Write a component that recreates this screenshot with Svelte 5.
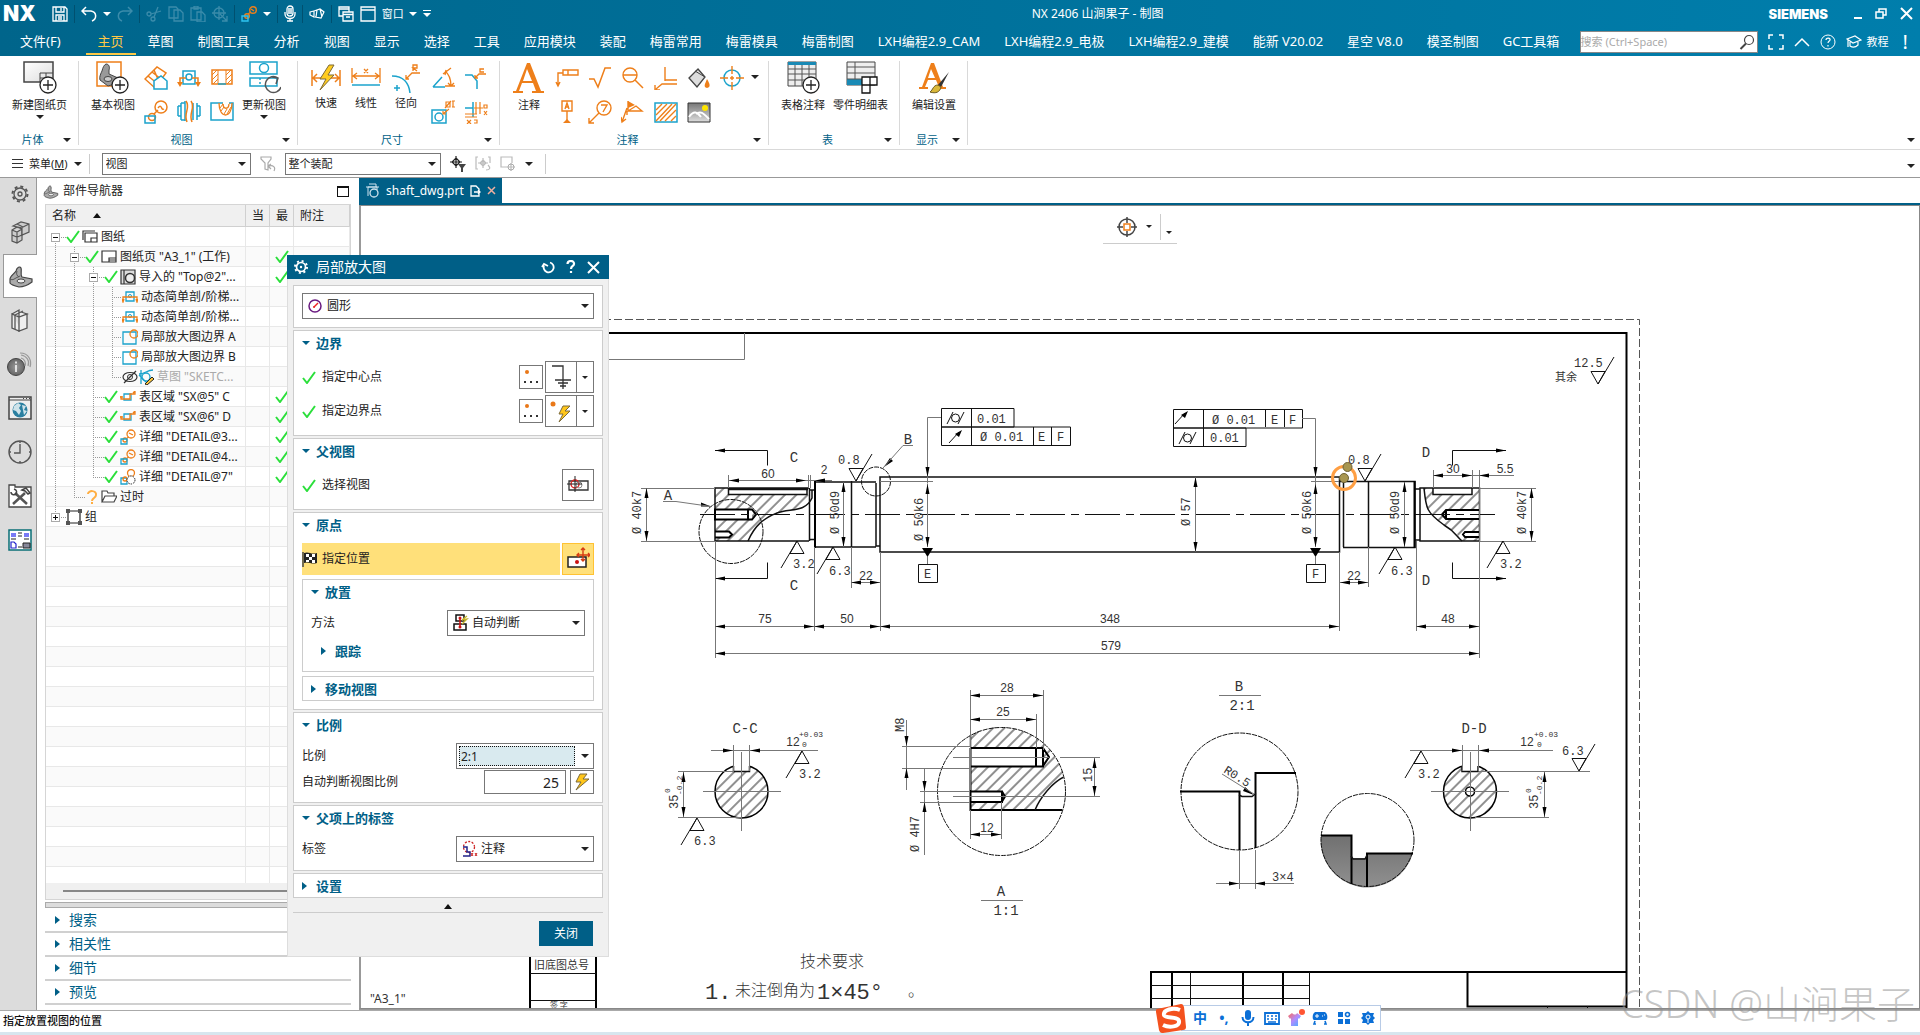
<script lang="ts">
	const O = '#ee7f1a';
	const C = '#1ba3cc';
	const G = '#555';

	// [width, height, markup]
	const icons: Record<string, [number, number, string]> = {
		save: [16, 16, '<g fill="none" stroke="#fff" stroke-width="1.3"><path d="M1 1h12l2 2v12H1z"/><path d="M4 1v5h8V1M9 2v3M4 15V9h8v6M6 11h4M6 13h4"/></g>'],
		undo: [16, 16, '<path d="M5 1L1 5l4 4M1 5h9c6 1 6 8 1 10" fill="none" stroke="#fff" stroke-width="1.5"/>'],
		redo: [16, 16, '<path d="M11 1l4 4-4 4M15 5H6C0 6 0 13 5 15" fill="none" stroke="#3b8cab" stroke-width="1.5"/>'],
		cut: [16, 16, '<g fill="none" stroke="#3b8cab" stroke-width="1.3"><circle cx="3" cy="8" r="2"/><circle cx="7" cy="13" r="2"/><path d="M5 8l10-3M8 11l4-10"/></g>'],
		copy: [16, 16, '<path d="M1 1h7l2 2v9H1zM6 4h6l3 3v8H6z" fill="#006a92" stroke="#3b8cab" stroke-width="1.3"/>'],
		paste: [16, 16, '<path d="M1 2h10v12H1zM4 0h4v3H4zM7 6h5l3 3v7H7z" fill="#006a92" stroke="#3b8cab" stroke-width="1.3"/>'],
		snap: [16, 16, '<g fill="none" stroke="#3b8cab" stroke-width="1.3"><circle cx="7" cy="7" r="5"/><path d="M7 0v14M0 7h14M8 8l7 7M15 10v5h-5"/></g>'],
		detailTop: [16, 16, `<g fill="none" stroke-width="1.4"><circle cx="12" cy="4" r="3.3" stroke="${O}"/><circle cx="6" cy="10" r="2.3" stroke="${O}"/><path d="M7 8l3-2M10 3l3 2" stroke="${O}"/><path d="M1 10h6v5H1z" stroke="#2ec3f0"/></g>`],
		mic: [12, 17, '<g fill="none" stroke="#fff" stroke-width="1.3"><rect x="3" y="1" width="6" height="10" rx="3"/><path d="M1 7v2c0 6 10 6 10 0V7M6 13v3M3 16h6M4 4h4M4 6h4M4 8h4"/></g>'],
		touch: [16, 14, '<path d="M1 5l4-1v6l-4-2zM5 4l6-2 4 3-3 6-6-1M8 3l-1 7M11 2l2 8" fill="none" stroke="#fff" stroke-width="1.2"/>'],
		cascade: [16, 16, '<g fill="#006a92" stroke="#fff" stroke-width="1.3"><path d="M1 1h10v9H1zM1 3h10"/><path d="M5 6h10v9H5zM5 8.500h10M8 11h4"/></g>'],
		win: [16, 16, '<path d="M1 1h14v14H1zM1 4h14" fill="none" stroke="#fff" stroke-width="1.300"/>'],
		restore: [12, 11, '<path d="M4 4V1h7v6H8M1 4h7v6H1z" fill="none" stroke="#fff" stroke-width="1.5"/>'],
		close: [13, 13, '<path d="M1 1l11 11M12 1L1 12" stroke="#fff" stroke-width="2"/>'],
		min: [8, 13, '<path d="M0 11h8" stroke="#fff" stroke-width="2"/>'],
		full: [16, 16, '<path d="M1 5V1h4M11 1h4v4M15 11v4h-4M5 15H1v-4" fill="none" stroke="#fff" stroke-width="1.500"/>'],
		up: [16, 10, '<path d="M1 9l7-7 7 7" fill="none" stroke="#fff" stroke-width="1.5"/>'],
		help: [16, 16, '<circle cx="8" cy="8" r="7" fill="none" stroke="#fff"/><path d="M6 6c0-3 5-2 4 0 0 1-2 1-2 3M8 11v1.500" fill="none" stroke="#fff" stroke-width="1.2"/>'],
		cap: [16, 14, '<path d="M1 4l8-3 6 4-8 3zM4 7v4c3 2 6 1 8-1V6M2 5v7" fill="none" stroke="#fff" stroke-width="1.2"/>'],
		search: [16, 16, '<circle cx="10" cy="6" r="4.500" fill="none" stroke="#444" stroke-width="1.200"/><path d="M7 9.500L1.500 15" stroke="#444" stroke-width="2"/>'],
		sheet: [34, 34, '<defs><linearGradient id="sg" x2="1" y2="1"><stop stop-color="#fff"/><stop offset="1" stop-color="#ddd"/></linearGradient></defs><path d="M1 1h29v20H1z" fill="url(#sg)" stroke="#444" stroke-width="1.5"/><path d="M17 21v-9h13M17 17h13M23 12v5" fill="none" stroke="#444"/><circle cx="25" cy="24" r="8" fill="#fff" stroke="#222" stroke-width="1.3"/><path d="M25 19v10M20 24h10" stroke="#222" stroke-width="1.3"/>'],
		base: [34, 34, `<path d="M1 1h24v24H1z" fill="none" stroke="${O}" stroke-width="1.5"/><path d="M4 19c-1-3 1-7 2-9 1-4 2-6 4-7 3 0 4 3 3 6v4l9 4v5l-10 3z" fill="#999" stroke="#444"/><ellipse cx="12" cy="18" rx="4" ry="2.500" fill="#ccc" stroke="#444"/><circle cx="24" cy="24" r="8" fill="#fff" stroke="#222" stroke-width="1.3"/><path d="M24 19v10M19 24h10" stroke="#222" stroke-width="1.300"/>`],
		update: [34, 34, `<g fill="none" stroke="${C}" stroke-width="1.5"><path d="M3 1h27v12H3zM3 17h27v8H3z"/><circle cx="17" cy="7" r="4.500"/><path d="M13 17v8" stroke-dasharray="2 2"/></g><path d="M31 17a8 8 0 1 0 3 9M25 16l6 1-2 6" fill="none" stroke="#555" stroke-width="1.500"/>`],
		project: [24, 24, `<path d="M1 13L13 1l9 6-11 15zM4 10l10 8M8 6l9 7M10 4l6 14" fill="#fff" stroke="${O}" stroke-width="1.500"/><path d="M10 23v-8l7-5 6 5v8z" fill="#fff" stroke="${C}" stroke-width="1.5"/>`],
		sect: [24, 24, `<g fill="none" stroke-width="1.500"><path d="M6 5h12v13H6z" stroke="${C}"/><circle cx="12" cy="11" r="3" stroke="${C}"/><path d="M9 12H3v6M15 12h6v6" stroke="${O}"/></g><path d="M0 16h6l-3 5zM18 16h6l-3 5z" fill="${O}"/>`],
		half: [24, 24, `<path d="M2 4h20v14H2z" fill="#fff" stroke="${O}" stroke-width="1.500"/><path d="M2 9l5-5M2 14l6-6M3 18l5-5M16 9l5-5M16 14l6-6M17 18l5-5M8 4v14M16 4v14" stroke="${O}" fill="none"/><path d="M8 18h8" stroke="${C}" stroke-width="1.5"/>`],
		detail: [24, 24, `<g fill="none" stroke-width="1.500"><circle cx="17" cy="7" r="6" stroke="${O}"/><circle cx="8" cy="17" r="3.500" stroke="${O}"/><path d="M10 14l4-4M14 8c4-5 3 3 6 1" stroke="${O}"/><path d="M1 16h10v7H1z" stroke="${C}"/></g>`],
		brk: [24, 24, `<g fill="none" stroke-width="1.500"><path d="M8 1v20M1 6v10M4 3v17M1 6h3M1 16h3M16 3v17M20 3v17M23 6v10M20 6h3M20 16h3M4 3h4M4 20h4" stroke="${C}"/><path d="M9 1c5 7-3 12 1 21M14 1c5 7-3 12 1 21" stroke="${O}"/></g>`],
		local: [24, 24, `<path d="M1 3h22v17H1z" fill="#fff" stroke="${C}" stroke-width="1.500"/><path d="M9 3c0 16 13 16 13 0M13 3c0 7 6 7 6 0" fill="none" stroke="${O}" stroke-width="1.300"/><path d="M10 8l3-4M11 11l3-4M14 14l3-5M17 14l4-7" stroke="${O}"/><path d="M13 3h6" stroke="#fff" stroke-width="2"/>`],
		quick: [30, 32, `<path d="M1 9v16M29 9v16M2 17h9M20 17h8M6 13l-4 4 4 4M24 13l4 4-4 4" fill="none" stroke="${O}" stroke-width="1.500"/><path d="M18 4l-9 14h6l-6 11 14-15h-6l6-10z" fill="#ffcc1f" stroke="#7c6a3a"/>`],
		linear: [30, 32, `<path d="M1 7v15M29 7v15M2 15h26M6 12l-4 3 4 3M24 12l4 3-4 3M13 8l4 4M17 8l-4 4" fill="none" stroke="${O}" stroke-width="1.300"/><path d="M1 24h28" stroke="${C}" stroke-width="1.500"/>`],
		radial: [30, 32, `<path d="M1 15c12 0 17 8 18 17" fill="none" stroke="${C}" stroke-width="1.500"/><path d="M3 27h6M6 24v6" stroke="${C}" stroke-width="1.500"/><path d="M29 12h-8l-6 6M18 18h-3v-4M22 10V4h4v3h-4l4 3" fill="none" stroke="${O}" stroke-width="1.300"/>`],
		angle: [24, 24, `<path d="M2 21h12M2 21l9-10" stroke="${C}" stroke-width="1.500" fill="none"/><path d="M14 5c5 4 6 9 6 15M12 8l8-6M14 9l1-5M14 20h10M17 17l3 3 3-3" stroke="${O}" stroke-width="1.300" fill="none"/>`],
		chamfer: [24, 24, `<path d="M1 9h7l5 6v8" stroke="${C}" stroke-width="1.500" fill="none"/><path d="M22 8h-7l-4 4M14 12h-3V9M20 3h-4v3h4" stroke="${O}" stroke-width="1.300" fill="none"/>`],
		hole: [24, 24, `<path d="M1 10h14v13H1z" stroke="${C}" stroke-width="1.500" fill="none"/><circle cx="8" cy="17" r="4" stroke="${C}" stroke-width="1.500" fill="none"/><path d="M18 9l-6 5M12 11v3h3M15 2h4v5h-4zM14 8l6-7M21 1h3M22 1v6M21 7h3" stroke="${O}" stroke-width="1.200" fill="none"/>`],
		ord: [24, 24, `<path d="M1 8h8V2M9 8v9" stroke="${C}" stroke-width="1.500" fill="none"/><path d="M12 2v12M16 2v12M20 5h3v3h-3zM20 11l3 4M23 11l-3 4M1 14h12M1 17h12M3 20l4 4M7 20l-4 4M10 20h3v3h-3M10 8h9" stroke="${O}" stroke-width="1.200" fill="none"/>`],
		bigA: [34, 34, `<path d="M15 2h3l11 28h3v2H20v-2h4l-3-8H10l-3 8h4v2H1v-2h3zM15 8l-4 12h9z" fill="${O}"/>`],
		gdt: [24, 24, `<path d="M8 4h15v5H8zM13 4v5M8 7H3v13M1 16l2 4 2-4" fill="none" stroke="${O}" stroke-width="1.400"/>`],
		rough: [24, 24, `<path d="M1 13h5l4 8 7-19h6" fill="none" stroke="${O}" stroke-width="1.500"/>`],
		lens: [24, 24, `<circle cx="9" cy="9" r="7" fill="none" stroke="${O}" stroke-width="1.400"/><path d="M2 9h14M14 14l8 8" stroke="${O}" stroke-width="1.500"/>`],
		weld: [24, 24, `<path d="M11 1v14M11 14h12M23 18H8l-6 5M1 19v5h5" fill="none" stroke="${O}" stroke-width="1.400"/>`],
		bucket: [24, 24, `<path d="M2 12L11 3l7 8-8 10z" fill="#ddd" stroke="#444" stroke-width="1.300"/><path d="M8 5l10 6" stroke="#444"/><path d="M20 13c3 5 4 8 0 9-4-1-2-4 0-9z" fill="${O}"/>`],
		cmark: [24, 24, `<circle cx="12" cy="12" r="8" fill="none" stroke="${C}" stroke-width="1.500"/><path d="M12 0v8M12 16v8M0 12h8M16 12h8M10 12h4M12 10v4" stroke="${O}" stroke-width="1.400"/>`],
		datum: [24, 24, `<path d="M7 1h10v10H7zM12 11v10M10 9l2-6 2 6M10 7h4" fill="none" stroke="${O}" stroke-width="1.400"/><path d="M8 23l4-4 4 4z" fill="${O}"/>`],
		balloon: [24, 24, `<circle cx="16" cy="8" r="7" fill="none" stroke="${O}" stroke-width="1.400"/><path d="M11 13L1 23M1 18v5h5M13 5h6l-4 7" fill="none" stroke="${O}" stroke-width="1.400"/>`],
		flag: [24, 24, `<path d="M7 1v10h14l-6-5-8 5M6 8L1 22M6 11v4M0 17l1 5 4-3" fill="none" stroke="${O}" stroke-width="1.400"/><path d="M7 1l7 4-7 3z" fill="${O}"/>`],
		hatch: [24, 24, `<path d="M1 3h22v19H1z" fill="#fff" stroke="${C}" stroke-width="1.500"/><path d="M2 10l6-6M2 15L13 4M2 21L18 4M6 21L22 4M11 21l11-11M17 21l5-5" stroke="${O}" stroke-width="1.400"/>`],
		image: [24, 24, '<defs><linearGradient id="ig" x2="0" y2="1"><stop stop-color="#777"/><stop offset="1" stop-color="#ddd"/></linearGradient></defs><path d="M1 3h22v19H1z" fill="url(#ig)" stroke="#333"/><circle cx="18" cy="8" r="3" fill="#ffe600"/><path d="M2 17c5-7 8-5 12 0M9 14c5-4 8 0 13 5" fill="none" stroke="#fff" stroke-width="2"/>'],
		table: [34, 34, '<path d="M2 1h28v24H2z" fill="#eee" stroke="#444"/><path d="M2 1h28v3H2z" fill="#1a8ab5"/><path d="M2 8h28M2 13h28M2 19h28M9 4v21M16 4v21M23 4v21" stroke="#555"/><circle cx="25" cy="24" r="8" fill="#fff" stroke="#222" stroke-width="1.300"/><path d="M25 19v10M20 24h10" stroke="#222" stroke-width="1.300"/>'],
		parts: [34, 34, '<path d="M3 1h28v23H3z" fill="#eee" stroke="#444"/><path d="M3 18h15v6H3z" fill="#1a8ab5"/><path d="M3 6h28M3 12h28M3 18h28M11 1v17" stroke="#555"/><path d="M18 16h15v8H18zM18 24h8v8h-8zM26 16v8" fill="#fff" stroke="#111" stroke-width="1.300"/>'],
		edit: [34, 34, `<path d="M14 2h3l9 24h3v2H18v-2h4l-3-7h-8l-3 7h3v2H2v-2h3zM14 8l-3 9h7z" fill="${O}"/><path d="M32 11L21 24l3 2z" fill="#333"/><path d="M21 24c-5 0-5 5-8 7 6 2 10 0 11-5z" fill="#d9b83a" stroke="#6b5a20"/>`],
		burger: [11, 9, '<path d="M0 .500h11M0 4.500h11M0 8.500h11" stroke="#333"/>'],
		filter: [16, 16, '<path d="M1 1h10v2L8 7v7l-3-1V7L1 3zM14 15c2-4-1-6-5-5M11 8l-3 2 3 3" fill="none" stroke="#aaa" stroke-width="1.200"/>'],
		pick: [16, 16, '<path d="M6 0v12M0 6h12M6 2l4 4-4 4-4-4z" fill="none" stroke="#222" stroke-width="1.200"/><path d="M8 8h8l-3 4v4h-2v-4z" fill="#444"/>'],
		pick2: [16, 16, '<path d="M3 1H1v12h2M8 2v10M3 7h10M8 4l3 3-3 3-3-3zM13 1h2v6M13 9c3 3 2 5-2 5" fill="none" stroke="#bbb" stroke-width="1.200"/>'],
		pick3: [16, 16, '<path d="M12 7V1H1v10h6M11 7v8M7 11h8" fill="none" stroke="#bbb" stroke-width="1.200"/><circle cx="11" cy="11" r="3" fill="none" stroke="#aaa"/>'],
		gear: [18, 18, '<g fill="none" stroke="#555" stroke-width="1.300"><circle cx="9" cy="9" r="6"/><circle cx="9" cy="9" r="2"/><circle cx="9" cy="9" r="7.500" stroke-dasharray="3 2.900" stroke-width="2"/></g>'],
		cubes: [22, 24, `<g fill="#ccc" stroke="${G}" stroke-width="1.200"><path d="M3 10l5-3 5 2v11l-5 3-5-2zM3 15l5 2 5-2M8 12v11M3 10l5 2 5-3"/><path d="M4 6l8-4 8 2v8l-7 3V8zM12 8l8-4M8 4l6 3M13 8L4 6"/></g>`],
		part: [26, 24, '<path d="M2 15c0-3 4-5 6-8 1-4 4-5 5-3 1 3-1 7 1 9l10 2v3c-4 3-9 5-13 5-4-1-8-2-9-4z" fill="#aaa" stroke="#444" stroke-width="1.200"/><path d="M2 15c3 2 5-1 8-2l2-1M9 7c-1 3 0 5 2 6" fill="none" stroke="#555"/><ellipse cx="13" cy="17" rx="4" ry="2" fill="#eee" stroke="#444"/>'],
		books: [20, 24, `<g fill="#eee" stroke="${G}" stroke-width="1.300"><path d="M2 6l7-4v16M2 6v14l7 3V9zM9 9l8-3v14l-8 3zM5 7l8-4M2 6l7 3 8-3-6-2"/><path d="M5 7v14"/></g>`],
		info: [26, 24, '<defs><radialGradient id="rg"><stop stop-color="#999"/><stop offset="1" stop-color="#666"/></radialGradient></defs><circle cx="9" cy="15" r="8.500" fill="url(#rg)" stroke="#444"/><path d="M9 13v7M9 9.500v2" stroke="#fff" stroke-width="1.500"/><g fill="none" stroke="#999" stroke-width="1.200"><path d="M14 6c4 1 5 5 4 8M14 3c6 1 9 6 7 11M13 1c9 0 12 8 10 14"/></g>'],
		globe: [24, 24, '<path d="M1 1h22v22H1z" fill="#eee" stroke="#444" stroke-width="1.500"/><path d="M1 4h22M15 2.500h1M18 2.500h1M21 2.500h1" stroke="#444"/><circle cx="12" cy="14" r="7.500" fill="#2a7fa0"/><path d="M6 10l4-3 3 2-2 3 2 3-2 4-3-4-3-1zM14 9l4 1-2 4 3 1-3 4-1-5z" fill="#cfe3ea"/>'],
		clock: [24, 24, '<circle cx="12" cy="12" r="11" fill="none" stroke="#555" stroke-width="1.400"/><path d="M12 4v9H6M12 1v2M12 21v2M1 12h2M21 12h2" stroke="#555" fill="none" stroke-width="1.400"/>'],
		tools: [24, 24, '<path d="M1 3V1h6v2h16v20H1z" fill="#fff" stroke="#444" stroke-width="1.300"/><path d="M5 20L17 9M19 20L7 9" stroke="#555" stroke-width="2.500"/><path d="M3 8c0 3 4 4 6 1M6 5c3 1 3 3 2 5M14 6l4-2 4 5-2 1-3-3z" fill="none" stroke="#444" stroke-width="1.500"/>'],
		flow: [24, 22, '<path d="M1 1h22v20H1z" fill="#fff" stroke="#0a6f76" stroke-width="1.500"/><path d="M3 4h5v4H3zM16 4h5v4h-5z" fill="#7a7af5"/><path d="M10 4h4M10 7h4M3 10h5M16 10h5M10 18h4" stroke="#222"/><path d="M3 13h3l2 2v4H3z" fill="#fff" stroke="#22c" stroke-width="1.200"/><path d="M15 14h7v5h-7z" fill="#889" stroke="#222"/>'],
		check: [14, 13, '<path d="M1 7l4 5L13 1" fill="none" stroke="#2bdf3b" stroke-width="2"/>'],
		quest: [14, 14, '<path d="M3 4c0-4 9-4 8 1 0 3-4 3-4 6M7 12v2" fill="none" stroke="#ffae42" stroke-width="2"/>'],
		tSheets: [16, 13, '<path d="M1 10V1h12M3 3h12v9H3zM9 12V8h6" fill="#fff" stroke="#333" stroke-width="1.200"/>'],
		tSheet: [16, 13, '<path d="M1 1h14v11H1zM8 12V8h7M8 10h7" fill="#fff" stroke="#333" stroke-width="1.200"/>'],
		tImport: [16, 16, '<path d="M1 1h14v14H1zM4 1v14" fill="#ddd" stroke="#333" stroke-width="1.200"/><circle cx="10" cy="9" r="4.500" fill="#eee" stroke="#333" stroke-width="1.500"/>'],
		tSect: [16, 12, `<path d="M4 1h8v9H4z" fill="none" stroke="${C}" stroke-width="1.300"/><circle cx="8" cy="5" r="1.500" fill="none" stroke="${C}"/><path d="M4 6H1v4M12 6h3v4M0 8l1 3 1-3M14 8l1 3 1-3M4 6h8" stroke="${O}" fill="none" stroke-width="1.300"/>`],
		tBound: [16, 16, `<path d="M1 3h13v12H1z" fill="none" stroke="${C}" stroke-width="1.300"/><circle cx="12" cy="5" r="4" fill="none" stroke="${O}" stroke-width="1.300"/>`],
		tSketch: [32, 16, `<ellipse cx="8" cy="8" rx="7" ry="4.500" fill="none" stroke="#333" stroke-width="1.200"/><circle cx="8" cy="8" r="2.500" fill="none" stroke="#333"/><path d="M2 14L14 2" stroke="#333" stroke-width="1.300"/><path d="M19 1v14M17 5c6 0 8-4 14-4M17 6l9 9" stroke="${C}" fill="none" stroke-width="1.300"/><circle cx="24" cy="8" r="4" stroke="${C}" fill="none" stroke-width="1.300"/><path d="M23 15l7-7 2 2-7 6z" fill="#ffc83d" stroke="#222"/>`],
		tRev: [16, 12, `<path d="M4 3h7v6H4z" fill="none" stroke="${C}" stroke-width="1.300"/><path d="M1 5v3h9V3h5V0M0 6h3M13 2l2-2" stroke="${O}" fill="none" stroke-width="1.300"/>`],
		tDetail: [16, 16, `<g fill="none" stroke-width="1.300"><circle cx="11" cy="5" r="4" stroke="${O}"/><circle cx="5" cy="11" r="2" stroke="${O}"/><path d="M7 9l2-1M9 4l4 2" stroke="${O}"/><path d="M1 10h6v5H1z" stroke="${C}"/></g>`],
		tDetail2: [16, 16, `<g fill="none" stroke-width="1.300"><circle cx="11" cy="4" r="3.500" stroke="${O}"/><path d="M1 9h6v6H1z" stroke="${C}"/><circle cx="5" cy="10" r="2" stroke="${O}"/></g><circle cx="11" cy="11" r="4" fill="#fff" stroke="#222" stroke-dasharray="1.500 1"/>`],
		tFolder: [16, 13, '<path d="M1 12V1h5l1 2h6v3M1 12L4 6h12l-3 6z" fill="#fff" stroke="#444" stroke-width="1.200"/>'],
		tGroup: [16, 16, '<path d="M2 2h12v12H2z" fill="#fff" stroke="#222" stroke-width="1.200"/><path d="M0 0h4v4H0zM12 0h4v4h-4zM0 12h4v4H0zM12 12h4v4h-4z" fill="#555"/>'],
		dGear: [14, 14, '<circle cx="7" cy="7" r="4.500" fill="none" stroke="#fff" stroke-width="1.700"/><circle cx="7" cy="7" r="1.200" fill="#fff"/><circle cx="7" cy="7" r="6" fill="none" stroke="#fff" stroke-width="2" stroke-dasharray="2 2.700"/>'],
		dReset: [14, 14, '<path d="M9 2.500a5 5 0 1 1-6 3M1 7l2-3 4 2" fill="none" stroke="#fff" stroke-width="1.800"/>'],
		dHelp: [10, 14, '<path d="M1.500 4c0-4 7-4 6.500 0 0 2-3 2-3 5M5 11v2" fill="none" stroke="#fff" stroke-width="2.200"/>'],
		circle: [14, 14, '<circle cx="7" cy="7" r="6" fill="none" stroke="#6a1a80" stroke-width="1.500"/><path d="M6 8l4-4" stroke="#e22" stroke-width="1.500"/><circle cx="6" cy="8" r="1" fill="#e22"/>'],
		dots: [16, 16, '<circle cx="4" cy="3" r="2" fill="#e97818"/><path d="M1 13h2M7 13h2M13 13h2" stroke="#333" stroke-width="2"/>'],
		ground: [24, 26, '<path d="M3 2h11v13M6 16h16M9 19h10M11 22h6M14 15v10" fill="none" stroke="#333" stroke-width="1.300"/>'],
		spark: [24, 24, '<circle cx="4" cy="5" r="2.500" fill="#e97818"/><path d="M14 7l-4 8h4l-4 8 11-11h-5l5-5z" fill="#ffc61a" stroke="#7c6a3a"/>'],
		bolt: [16, 18, '<path d="M6 1L2 9h5l-5 8L15 6h-6l4-5z" fill="#ffc61a" stroke="#7c6a3a"/>'],
		view: [24, 20, '<path d="M3 6h19v9H3z" fill="none" stroke="#333" stroke-width="1.300"/><circle cx="9" cy="9" r="4" fill="none" stroke="#d22" stroke-width="1.400"/><circle cx="13" cy="10" r="3" fill="none" stroke="#888"/><path d="M9 1v16M1 9h15" stroke="#222"/>'],
		place: [24, 24, '<path d="M2 10h18v10H2z" fill="#fff" stroke="#222" stroke-width="1.500"/><circle cx="11" cy="15" r="2" fill="#c11"/><path d="M17 1v13M11 8h13M15 3l2-2 2 2M15 12l2 2 2-2M13 6l-2 2 2 2M22 6l2 2-2 2" fill="none" stroke="#d63b12" stroke-width="1.400"/>'],
		finish: [16, 16, '<path d="M1 1v15" stroke="#444" stroke-width="1.500"/><path d="M2 2c5-2 7 2 13 0v10c-6 2-8-2-13 0z" fill="#222"/><path d="M4 3h3v3H4zM10 3h3v3h-3zM7 6h3v3H7zM4 9h3v2H4zM10 9h3v3h-3z" fill="#fff"/>'],
		infer: [16, 18, '<path d="M3 1h8v6H3zM1 10h12v6H1z" fill="#fff" stroke="#111" stroke-width="1.500"/><path d="M7 4v10" stroke="#c11" stroke-width="1.500"/><circle cx="7" cy="4" r="1.500" fill="#c11"/><circle cx="7" cy="13" r="1.500" fill="#c11"/><path d="M14 2l-5 4 5-1-5 5" stroke="#c5b52a" fill="none" stroke-width="1.300"/>'],
		note: [16, 18, '<circle cx="7" cy="7" r="5.500" fill="none" stroke="#c22" stroke-width="1.300" stroke-dasharray="2 1.500"/><path d="M1 7h4v5h3v4H1" fill="none" stroke="#228" stroke-width="1.500"/><path d="M9 13l2 3M11 13l-2 3M13 13l2 3M15 13l-2 3" stroke="#c22"/>'],
		target: [22, 22, '<circle cx="11" cy="11" r="8" fill="none" stroke="#444" stroke-width="1.500"/><path d="M11 1v6M11 15v6M1 11h6M15 11h6" stroke="#444" stroke-width="1.500"/><path d="M8 8h6v6H8z" fill="#fff" stroke="#ee7f1a" stroke-width="1.500"/>'],
		tabPart: [15, 16, '<path d="M3 13V4h9v3M1 4h13M4 1h7v3" fill="none" stroke="#cfe3ee"/><circle cx="9" cy="10" r="4" fill="none" stroke="#cfe3ee" stroke-width="1.300"/>'],
		tabSave: [11, 12, '<path d="M1 1h5l3 3v7H1zM4 7h6M8 5l2 2-2 2" fill="none" stroke="#fff" stroke-width="1.300"/>'],
		tabClose: [9, 9, '<path d="M1 1l7 7M8 1L1 8" stroke="#f0b0a0" stroke-width="1.500"/>'],
		imeMic: [14, 18, '<rect x="4" y="1" width="6" height="10" rx="3" fill="#0b6fd6"/><path d="M1.500 8c0 7 11 7 11 0M7 13v4" fill="none" stroke="#0b6fd6" stroke-width="2"/>'],
		imeKey: [16, 14, '<path d="M1 2h14v11H1z" fill="#fff" stroke="#0b6fd6" stroke-width="1.800"/><path d="M3 5h2M7 5h2M11 5h2M3 8h2M7 8h2M11 8h2M4 11h8" stroke="#0b6fd6" stroke-width="1.500"/>'],
		imeShirt: [18, 18, '<defs><linearGradient id="tg" x2="1" y2="1"><stop stop-color="#ff6b57"/><stop offset=".5" stop-color="#b08cff"/><stop offset="1" stop-color="#3fb0ff"/></linearGradient></defs><path d="M1 7l4-3c2 2 4 2 5 0l4 3-2 3-1-1v8H4V9l-1 1z" fill="url(#tg)"/><circle cx="15" cy="3" r="3" fill="#ff5533"/>'],
		imePad: [16, 14, '<path d="M4 1h8c4 0 4 8 2 8H2C0 9 0 1 4 1z" fill="#0b6fd6"/><path d="M5 3v4M3 5h4M10 5h1M12 4h1" stroke="#fff"/><path d="M3 10l-1 3h2M13 10l1 3h-2" stroke="#0b6fd6" fill="none" stroke-width="1.600"/>'],
		imeGrid: [14, 14, '<path d="M1 1h5v5H1zM1 8h5v5H1zM8 8h5v5H8z" fill="#0b6fd6"/><circle cx="10.500" cy="3.500" r="2" fill="none" stroke="#0b6fd6" stroke-width="1.600"/>'],
		imeGear: [14, 14, '<path d="M7 0l2 2 4 0-1 3 2 2-2 2 1 3-4 0-2 2-2-2-4 0 1-3-2-2 2-2-1-3 4 0z" fill="#0b6fd6"/><circle cx="7" cy="6" r="2" fill="none" stroke="#fff"/><path d="M7 8v4" stroke="#fff"/>'],
		sogou: [32, 30, '<path d="M2 6L26 1c2 0 2 1 3 3l2 20c0 2-1 3-3 3L8 30c-3 0-3-1-4-3L1 9c0-2 0-3 1-3z" fill="#f4511e"/><path d="M25 7C18 4 8 7 9 12c1 4 14 1 15 6 1 6-10 7-16 4" fill="none" stroke="#fff" stroke-width="4"/>']
	};

	const quick = ['save', '|', 'undo', 'v', 'redo', '|', 'cut', 'copy', 'paste', 'snap', '|', 'detailTop', 'v', '|', 'mic', '|', 'touch', '|', 'cascade', 'win'];

	const tabs = ['主页', '草图', '制图工具', '分析', '视图', '显示', '选择', '工具', '应用模块', '装配', '梅雷常用', '梅雷模具', '梅雷制图', 'LXH编程2.9_CAM', 'LXH编程2.9_电极', 'LXH编程2.9_建模', '能新 V20.02', '星空 V8.0', '模圣制图', 'GC工具箱'];

	type Item = { icon: string; label: string; menu?: boolean } | { grid: string[]; cols: number };

	const groups: { name: string; items: Item[]; more?: boolean }[] = [
		{ name: '片体', items: [{ icon: 'sheet', label: '新建图纸页', menu: true }] },
		{
			name: '视图',
			items: [
				{ icon: 'base', label: '基本视图' },
				{ cols: 3, grid: ['project', 'sect', 'half', 'detail', 'brk', 'local'] },
				{ icon: 'update', label: '更新视图', menu: true }
			]
		},
		{
			name: '尺寸',
			items: [
				{ icon: 'quick', label: '快速' },
				{ icon: 'linear', label: '线性' },
				{ icon: 'radial', label: '径向' },
				{ cols: 2, grid: ['angle', 'chamfer', 'hole', 'ord'] }
			]
		},
		{
			name: '注释',
			more: true,
			items: [
				{ icon: 'bigA', label: '注释' },
				{ cols: 6, grid: ['gdt', 'rough', 'lens', 'weld', 'bucket', 'cmark', 'datum', 'balloon', 'flag', 'hatch', 'image'] }
			]
		},
		{ name: '表', items: [{ icon: 'table', label: '表格注释' }, { icon: 'parts', label: '零件明细表' }] },
		{ name: '显示', items: [{ icon: 'edit', label: '编辑设置' }] }
	];

	const rail = ['gear', 'cubes', 'part', 'books', 'info', 'globe', 'clock', 'tools', 'flow'];

	const tree = [
		{ level: 0, box: '-', mark: 'check', icon: 'tSheets', label: '图纸' },
		{ level: 1, box: '-', mark: 'check', icon: 'tSheet', label: '图纸页 "A3_1" (工作)', ok: true },
		{ level: 2, box: '-', mark: 'check', icon: 'tImport', label: '导入的 "Top@2"...', ok: true },
		{ level: 3, icon: 'tSect', label: '动态简单剖/阶梯...' },
		{ level: 3, icon: 'tSect', label: '动态简单剖/阶梯...' },
		{ level: 3, icon: 'tBound', label: '局部放大图边界 A' },
		{ level: 3, icon: 'tBound', label: '局部放大图边界 B' },
		{ level: 3, icon: 'tSketch', label: '草图 "SKETC...', dim: true },
		{ level: 2, mark: 'check', icon: 'tRev', label: '表区域 "SX@5" C', ok: true },
		{ level: 2, mark: 'check', icon: 'tRev', label: '表区域 "SX@6" D', ok: true },
		{ level: 2, mark: 'check', icon: 'tDetail', label: '详细 "DETAIL@3...', ok: true },
		{ level: 2, mark: 'check', icon: 'tDetail', label: '详细 "DETAIL@4...', ok: true },
		{ level: 2, mark: 'check', icon: 'tDetail2', label: '详细 "DETAIL@7"', ok: true },
		{ level: 1, mark: 'quest', icon: 'tFolder', label: '过时' },
		{ level: 0, box: '+', icon: 'tGroup', label: '组' }
	];

	// dotted guides of the tree: x, first row, last row
	const guides = [
		[9, 0.5, 14.5],
		[28, 1, 13.5],
		[47, 2, 12.5],
		[66, 3, 7.5]
	];

	function guidePath(i: number, level: number) {
		const parts = guides
			.filter(([, a, b]) => a < i + 1 && b > i)
			.map(([x, a, b]) => `M${x}.5 ${(Math.max(a, i) - i) * 20}V${(Math.min(b, i + 1) - i) * 20}`);
		parts.push(`M${9 + level * 19} 10.5h11`);
		return parts.join('');
	}

	const sections = ['搜索', '相关性', '细节', '预览'];

	// ---- drawing ----
	const arrows: string[] = [];
	const thin: string[] = [];

	function arrow(x: number, y: number, dir: string) {
		const s = { l: 'l10-2v4z', r: 'l-10-2v4z', u: 'l-2 10h4z', d: 'l-2-10h4z' }[dir];
		arrows.push(`M${x} ${y}${s}`);
	}
	function hdim(x1: number, x2: number, y: number) {
		thin.push(`M${x1} ${y}H${x2}`);
		arrow(x1, y, 'l');
		arrow(x2, y, 'r');
	}
	function vdim(y1: number, y2: number, x: number) {
		thin.push(`M${x} ${y1}V${y2}`);
		arrow(x, y1, 'u');
		arrow(x, y2, 'd');
	}

	hdim(729, 806, 480.5);
	hdim(715, 814, 626.5);
	hdim(814, 880, 626.5);
	hdim(880, 1339, 626.5);
	hdim(1416, 1479, 626.5);
	hdim(715, 1479, 653.5);
	hdim(851, 880, 582.5);
	hdim(1340, 1368, 582.5);
	hdim(1433, 1472, 475.5);
	vdim(488, 541, 646.5);
	vdim(482, 547, 843.5);
	vdim(484, 547, 927.5);
	vdim(477, 552, 1195.5);
	vdim(484, 547, 1315.5);
	vdim(482, 547, 1404.5);
	vdim(488, 541, 1531.5);
	hdim(970, 1043, 695.5);
	hdim(970, 1036, 719.5);
	hdim(970, 1001, 834.5);
	vdim(758, 796, 1094.5);
	vdim(772, 817, 683.5);
	vdim(772, 817, 1544.5);
	arrow(815, 480.5, 'l');
	arrow(1479, 475.5, 'l');
	arrow(927.5, 477, 'd');
	arrow(1315.5, 477, 'd');
	arrow(715, 450.5, 'l');
	arrow(715, 578.5, 'l');
	arrow(1506, 450.5, 'r');
	arrow(1506, 578.5, 'r');
	arrow(733, 750.5, 'r');
	arrow(750, 750.5, 'l');
	arrow(1462, 750.5, 'r');
	arrow(1479, 750.5, 'l');
	arrow(1239, 883.5, 'r');
	arrow(1255, 883.5, 'l');
	arrow(906.5, 746, 'd');
	arrow(906.5, 768, 'u');
	arrow(924.5, 791, 'd');
	arrow(924.5, 802, 'u');

	thin.push(
		// extension lines
		'M728.5 475v13M808.5 475v13M810.5 475v13M804 480.5h28M641 488.5h74M641 541.5h74',
		'M715.5 541v117M814.5 547v84M880.5 552v79M851.5 547v41M1339.500 552v79M1416.500 541v90M1479.500 470v188M1368.500 547v40',
		'M1433.500 470v18M1472.500 470v18M1472 475.500h42M1479 488.500h57M1479 541.500h57M880 481.500h53M1311 481.500h28',
		'M941 417.500h-13.500v66M1302 418.500h13.500v66M927.500 557v7M1315.500 557v7',
		'M663 501.500h13l35 5M883 468l20-22.500h10',
		// section C-C
		'M711 750.500h107M733.500 745v26M749.500 745v26M741.500 752v79M703 791.500h78M678 771.500h56M678 817.500h63',
		// section D-D
		'M1410 750.500h143M1462.500 745v26M1478.500 745v26M1470.500 752v79M1431 791.500h78M1479 771.500h111M1475 817.500h74',
		// detail A
		'M970.500 690v100M1043.500 690v60M1036.500 714v34M970.500 810v29M1001.500 802v37M902 746.500h68M902 768.500h68M920 791.500h50M920 802.500h50M906.500 720v70M924.500 768v87M1060 757.500h40M1010 796.500h90M981 900.500h42',
		'M953 757.500h96M953 796.500h57',
		// detail B
		'M1239.500 850v39M1255.500 850v39M1216 883.500h78M1219 695.500h42M1222 774l32 20'
	);

	// roughness marks: apex x, y, 1 above the surface, -1 below
	const marks = [
		[856, 481, 1],
		[1365, 481, 1],
		[1598, 384, 1],
		[1579, 771, 1],
		[797, 541, -1],
		[833, 547, -1],
		[1395, 547, -1],
		[1503, 541, -1],
		[802, 751, -1],
		[697, 818, -1],
		[1421, 751, -1]
	];

	type Label = [number, number, string, string?, number?];
	const labels: Label[] = [
		[768, 478, '60', 'mid'],
		[824, 474, '2', 'mid'],
		[765, 623, '75', 'mid'],
		[847, 623, '50', 'mid'],
		[1110, 623, '348', 'mid'],
		[1448, 623, '48', 'mid'],
		[1111, 650, '579', 'mid'],
		[866, 580, '22', 'mid'],
		[1354, 580, '22', 'mid'],
		[1453, 473, '30', 'mid'],
		[1505, 473, '5.5', 'mid'],
		[1007, 692, '28', 'mid'],
		[1003, 716, '25', 'mid'],
		[987, 832, '12', 'mid'],
		[793, 746, '12', 'mid'],
		[1527, 746, '12', 'mid'],
		[794, 462, 'C', 'sec'],
		[794, 590, 'C', 'sec'],
		[1426, 457, 'D', 'sec'],
		[1426, 585, 'D', 'sec'],
		[908, 444, 'B', 'sec'],
		[668, 500, 'A', 'sec'],
		[745, 733, 'C-C', 'sec'],
		[1474, 733, 'D-D', 'sec'],
		[1001, 896, 'A', 'sec'],
		[1006, 915, '1:1', 'sec'],
		[1239, 691, 'B', 'sec'],
		[1242, 710, '2:1', 'sec'],
		[838, 464, '0.8', 'ann'],
		[1348, 464, '0.8', 'ann'],
		[1574, 367, '12.5', 'ann'],
		[793, 568, '3.2', 'ann'],
		[829, 575, '6.3', 'ann'],
		[1391, 575, '6.3', 'ann'],
		[1500, 568, '3.2', 'ann'],
		[799, 778, '3.2', 'ann'],
		[694, 845, '6.3', 'ann'],
		[1418, 778, '3.2', 'ann'],
		[1562, 755, '6.3', 'ann'],
		[977, 423, '0.01', 'ann'],
		[980, 441, 'Ø 0.01', 'ann'],
		[1038, 441, 'E', 'ann'],
		[1057, 441, 'F', 'ann'],
		[1212, 424, 'Ø 0.01', 'ann'],
		[1271, 424, 'E', 'ann'],
		[1289, 424, 'F', 'ann'],
		[1210, 442, '0.01', 'ann'],
		[924, 578, 'E', 'ann'],
		[1312, 578, 'F', 'ann'],
		[1272, 881, '3×4', 'ann'],
		[799, 737, '+0.03', 'tiny'],
		[802, 747, '0', 'tiny'],
		[1534, 737, '+0.03', 'tiny'],
		[1537, 747, '0', 'tiny'],
		[641, 534, 'Ø 40k7', 'ann', -90],
		[839, 534, 'Ø 50d9', 'ann', -90],
		[923, 541, 'Ø 50k6', 'ann', -90],
		[1190, 526, 'Ø 57', 'ann', -90],
		[1311, 534, 'Ø 50k6', 'ann', -90],
		[1399, 534, 'Ø 50d9', 'ann', -90],
		[1526, 534, 'Ø 40k7', 'ann', -90],
		[919, 852, 'Ø 4H7', 'ann', -90],
		[904, 732, 'M8', 'ann', -90],
		[1092, 782, '15', 'ann', -90],
		[678, 809, '35', 'ann', -90],
		[670, 793, '0', 'tiny', -90],
		[682, 795, '-0.2', 'tiny', -90],
		[1538, 809, '35', 'ann', -90],
		[1531, 793, '0', 'tiny', -90],
		[1542, 795, '-0.2', 'tiny', -90],
		[1223, 772, 'R0.5', 'ann', 32],
		[1555, 381, '其余', 'cn'],
		[800, 967, '技术要求', 'big'],
		[705, 999, '1.', 'wide'],
		[735, 996, '未注倒角为', 'big'],
		[817, 999, '1×45°', 'wide'],
		[908, 996, '。', 'big'],
		[370, 1003, '"A3_1"', 'name'],
		[534, 969, '旧底图总号', 'cn'],
		[550, 1008, '签 字', 'cn low']
	];

	let search = '';
	let scale = '2:1';
	let inferred = '25';
</script>

{#snippet icon(name: string)}
	{@const [w, h, body] = icons[name]}
	<svg class="icon" width={w} height={h} viewBox="0 0 {w} {h}" aria-hidden="true">{@html body}</svg>
{/snippet}

{#snippet head(label: string, open = true)}
	<h3><span class={open ? 'tri' : 'tri shut'}></span>{label}</h3>
{/snippet}

<div class="app">
	<header>
		<div class="quick">
			<strong class="nx">NX</strong>
			{#each quick as q}
				{#if q === '|'}
					<span class="bar"></span>
				{:else if q === 'v'}
					<span class="caret"></span>
				{:else}
					<button aria-label={q}>{@render icon(q)}</button>
				{/if}
			{/each}
			<button class="window">窗口 <span class="caret"></span></button>
			<button class="custom" aria-label="自定义"><span class="caret"></span></button>
			<h1>NX 2406 山涧果子 - 制图</h1>
			<strong class="siemens">SIEMENS</strong>
			<div class="controls">
				<button aria-label="最小化">{@render icon('min')}</button>
				<button aria-label="还原">{@render icon('restore')}</button>
				<button aria-label="关闭窗口">{@render icon('close')}</button>
			</div>
		</div>
		<nav>
			<button class="tab file">文件(F)</button>
			{#each tabs as tab, i}
				<button class="tab" class:active={i === 0}>{tab}</button>
			{/each}
			<label class="search">
				<input type="text" placeholder="搜索 (Ctrl+Space)" aria-label="搜索" bind:value={search} />
				{@render icon('search')}
			</label>
			<div class="tail">
				<button aria-label="全屏">{@render icon('full')}</button>
				<button aria-label="折叠">{@render icon('up')}</button>
				<button aria-label="帮助">{@render icon('help')}</button>
				<button class="learn">{@render icon('cap')} 教程</button>
				<span class="bang">!</span>
			</div>
		</nav>
	</header>

	<div class="ribbon">
		{#each groups as group}
			<section class="group">
				<div class="items">
					{#each group.items as item}
						{#if 'grid' in item}
							<div class="grid" style="grid-template-columns: repeat({item.cols}, 33px)">
								{#each item.grid as name}
									<button aria-label={name}>{@render icon(name)}</button>
								{/each}
							</div>
						{:else}
							<button class="big">
								{@render icon(item.icon)}
								<span>{item.label}</span>
								{#if item.menu}<span class="caret"></span>{/if}
							</button>
						{/if}
					{/each}
					{#if group.more}<span class="caret more"></span>{/if}
				</div>
				<footer>{group.name}<span class="caret"></span></footer>
			</section>
		{/each}
		<span class="caret end"></span>
	</div>

	<div class="selection">
		<button class="menu">{@render icon('burger')}<span>菜单(<u>M</u>)</span><span class="caret"></span></button>
		<span class="rule"></span>
		<div class="combo type">
			<select aria-label="类型过滤器"><option>视图</option></select><span class="caret"></span>
		</div>
		<button aria-label="重置过滤器">{@render icon('filter')}</button>
		<div class="combo scope">
			<select aria-label="选择范围"><option>整个装配</option></select><span class="caret"></span>
		</div>
		<div class="picks">
			<button aria-label="选择">{@render icon('pick')}</button>
			<button aria-label="上一步">{@render icon('pick2')}</button>
			<button aria-label="框选">{@render icon('pick3')}</button>
			<span class="caret"></span>
		</div>
		<span class="rule"></span>
		<span class="caret end"></span>
	</div>

	<main>
		<aside class="rail">
			{#each rail as name}
				<button class:active={name === 'part'} aria-label={name}>{@render icon(name)}</button>
			{/each}
		</aside>

		<div class="navigator">
			<h2>
				<svg class="icon" width="16" height="15" viewBox="0 0 26 24" aria-hidden="true">{@html icons.part[2]}</svg>
				部件导航器
				<span class="square"></span>
			</h2>
			<div class="scroll">
				<table>
					<colgroup><col class="c-name" /><col class="c-flag" /><col class="c-flag" /><col /></colgroup>
					<thead>
						<tr><th>名称 <span class="sort"></span></th><th>当</th><th>最</th><th>附注</th></tr>
					</thead>
					<tbody>
						{#each tree as row, i}
							<tr>
								<td>
									<div class="node" class:dim={row.dim}>
										<svg class="guide" width={row.level === 3 ? 76 : 20 + row.level * 19} height="20" aria-hidden="true">
											<path d={guidePath(i, row.level)} />
											{#if row.box}
												<rect x={5 + row.level * 19 + 0.5} y="6.500" width="8" height="8" />
												<path class="sign" d="M{7 + row.level * 19} 10.500h5{row.box === '+' ? 'm-2.500-2.500v5' : ''}" />
											{/if}
										</svg>
										{#if row.mark}{@render icon(row.mark)}{/if}
										{@render icon(row.icon)}
										<span>{row.label}</span>
									</div>
								</td>
								<td></td>
								<td>{#if row.ok}{@render icon('check')}{/if}</td>
								<td></td>
							</tr>
						{/each}
						{#each Array(18) as _}
							<tr><td></td><td></td><td></td><td></td></tr>
						{/each}
					</tbody>
				</table>
			</div>
			<div class="hscroll"><span></span></div>
			<div class="splitter"></div>
			{#each sections as name}
				<button class="fold"><span class="tri shut"></span>{name}</button>
			{/each}
		</div>

		<div class="work">
			<div class="doc-tabs">
				<button>{@render icon('tabPart')} shaft_dwg.prt {@render icon('tabSave')} {@render icon('tabClose')}</button>
			</div>
			<div class="canvas">
				<svg class="drawing" role="img" aria-label="shaft_dwg">
					<defs>
						<pattern id="hatching" width="8" height="8" patternUnits="userSpaceOnUse" patternTransform="rotate(45)">
							<path d="M1 0v8" stroke="#222" />
						</pattern>
						<clipPath id="clip-a"><circle cx="1001" cy="791" r="64" /></clipPath>
						<linearGradient id="steel" x2="0" y2="1"><stop stop-color="#707070" /><stop offset="1" stop-color="#909090" /></linearGradient>
					</defs>
					<g transform="translate(-361 -206)">
						<!-- sheet frame and title block -->
						<path class="dash" d="M361 319.500H1639.500V1010" />
						<path class="thick" d="M361 333H1626.500V1010" />
						<path class="thin" d="M361 359.500H744.500V333" />
						<path class="thick" d="M530 900V1010M596 900V1010M1151 1010V972H1626M1172 972v38M1467.500 972v34.500H1626M1243 972v38M1283 972v38" />
						<path class="line" d="M530 973.500h66M530 1000.500h66M1190.500 972v38M1309.500 972v38M1151 985.500h158M1151 998.500h158M1547.500 1006v4M1587.500 1006v4" />

						<!-- shaft -->
						<path fill="url(#hatching)" d="M715 488H728.500V494.500H808L811 498C805 513 790 508 777 513S755 525 748 541H715V537H731V531.500H715V519.500H752V509.500H715z" />
						<path fill="url(#hatching)" d="M1424 488H1433V494.500H1472V488H1479V510H1443V519H1479V532H1463V537H1479V541H1462C1456 532 1456 532 1444 525 1426 512 1426 508 1424 488z" />
						<path class="body" d="M809 488H715V541H809M728.500 488v6.500H807V488M728 489.500h80M809.500 488v53M809 490h6M809 539.500h6M876 482H815V547H876M851.500 481v66M876 483v63h4M880 477v75H1339.500V477zM1343.500 481v66M1339 481.500H1415V547.500H1343M1368.500 481v66M1415 489h5M1415 540h5M1420 488H1479.500V541H1420zM1433 488v6.500h39V488" />
						<path class="thick" d="M815 481v67M1414.500 481v67M715 509.500H752l4 5-4 5H715zM748 510v9M715 531.500h14l3 3-3 3H715M1479 510H1446l-4 4.500 4 4.500h33M1446 510v9M1479 532h-14l-2 2.500 2 2.500h14" />
						<path class="body" d="M812 490v8C805 513 790 508 777 513S755 525 748 541M1424 488C1426 508 1426 512 1444 525 1456 532 1456 536 1462 541" />
						<path class="line" stroke-dasharray="35 6 8 6" d="M700 514.500H1495" />
						<circle class="chain" cx="731" cy="531.500" r="32" />
						<circle class="chain" cx="876" cy="481.500" r="14.500" />
						<path class="line" d="M715 450.500H767.500v15M715 578.500H767.500v-16M1506 450.500H1452.500v15M1506 578.500H1452.500v-16" />

						<!-- tolerance frames and datums -->
						<path class="line" d="M941.500 408.500h72.500v18.500H941.500zM971.500 408v37M941.500 427h129v18.500h-129zM1033.500 427v18M1051.500 427v18" />
						<path class="line" d="M1173.500 409.500h129v18.500h-129zM1203.500 409v37M1265.500 409v18M1284.500 409v18M1173.500 428H1246v18.500h-72.500z" />
						<path class="line" d="M918.500 564.500h19v18h-19zM1306.500 564.500h19v18h-19zM947 424l6-12M958 424l6-12M949 443l10-11M1175 424l10-11M1179 444l6-12M1190 444l6-12" />
						<circle class="line" cx="955.500" cy="418" r="4" />
						<circle class="line" cx="1187.500" cy="438" r="4" />
						<path d="M962 430l-7 4 4 3zM1188 411l-7 4 4 3zM922 548h11l-5.500 9zM1310 548h11l-5.500 9zM711 506.500l-10-4v4zM884 467l6-9 3 3zM1254 795l-9-8-2 4z" />

						<!-- sections C-C and D-D -->
						{#each [741.5, 1470] as cx}
							<circle cx={cx} cy="791.500" r="26.500" fill="url(#hatching)" class="outline" />
							<path d="M{cx - 8} 760h16v11.500h-16z" fill="#fff" />
							<path class="body" d="M{cx - 8} 766v5.500h16V766" />
						{/each}
						<circle cx="1470" cy="791.500" r="4.500" fill="#fff" class="outline" />

						<!-- detail A -->
						<g clip-path="url(#clip-a)">
							<path fill="url(#hatching)" d="M970 720h100v56c-20 10-30 22-35 34H970zM970 748v18.500h73V748zM970 791.500V802h32v-10.500z" fill-rule="evenodd" />
							<path class="thick" d="M970.500 748v62H1066M970 748h73v18.500H970M1036 748v18M1043 748l6 9-6 9M970 791.500h32V802H970M1002 791.500l3 5-3 5" />
							<path class="body" d="M1035 810C1040 798 1052 782 1066 776M970.500 727v20" />
						</g>
						<circle class="chain" cx="1001.500" cy="791.500" r="64" />

						<!-- detail B and its shaded view -->
						<circle class="chain" cx="1239.500" cy="791.500" r="58.500" />
						<path class="thick" d="M1180 791.500h59.500V850M1255.500 848V773H1296" />
						<path class="body" d="M1239 795l3 1.500h10l4-3" />
						<path fill="url(#steel)" d="M1321 835h30v23h16v-5h46A47 47 0 0 1 1321 835z" />
						<circle class="chain" cx="1367.500" cy="840" r="46.500" />
						<path class="thick" d="M1321 835.500h30.500V884M1413 853.500h-46V887" />
						<path class="body" d="M1351 856l2 3h12l2-4" />

						<path class="thin" d={thin.join('')} />
						<path d={arrows.join('')} />
						{#each marks as [x, y, s]}
							<path class="line rough" d="M{x} {y}l{-7 * s} {-12.5 * s}h{14 * s}zL{x + 16 * s} {y - 27 * s}" />
						{/each}

						<!-- preview of the new view -->
						<circle cx="1344" cy="478" r="11.500" fill="none" stroke="#ff9f43" stroke-width="3" />
						<circle class="dot" cx="1347.500" cy="467" r="4.500" />
						<circle class="dot" cx="1344" cy="478" r="4.500" />

						{#each labels as [x, y, text, kind, turn]}
							<text class={kind} {x} {y} transform={turn ? `rotate(${turn} ${x} ${y})` : undefined}>{text}</text>
						{/each}
					</g>
				</svg>
				<div class="float">
					<button aria-label="目标">{@render icon('target')}</button>
					<span class="caret"></span><i></i><span class="caret low"></span>
				</div>
			</div>
		</div>
	</main>

	<footer class="status">指定放置视图的位置</footer>

	<div class="dialog" role="dialog" aria-labelledby="dialog-title">
		<div class="title">
			{@render icon('dGear')}
			<h2 id="dialog-title">局部放大图</h2>
			<button aria-label="重置">{@render icon('dReset')}</button>
			<button aria-label="帮助">{@render icon('dHelp')}</button>
			<button aria-label="关闭对话框">{@render icon('close')}</button>
		</div>
		<div class="card first">
			<div class="combo">
				{@render icon('circle')}
				<select aria-label="类型"><option>圆形</option></select><span class="caret"></span>
			</div>
		</div>
		<div class="card bound">
			{@render head('边界')}
			{#each [['指定中心点', 'ground'], ['指定边界点', 'spark']] as [label, name]}
				<div class="row tall">
					{@render icon('check')}<span class="grow">{label}</span>
					<button class="sq small" aria-label="点对话框">{@render icon('dots')}</button>
					<div class="split">
						<button aria-label={label}>{@render icon(name)}</button>
						<button class="drop" aria-label="更多"><span class="caret"></span></button>
					</div>
				</div>
			{/each}
		</div>
		<div class="card parent">
			{@render head('父视图')}
			<div class="row tall">
				{@render icon('check')}<span class="grow">选择视图</span>
				<button class="sq" aria-label="选择视图">{@render icon('view')}</button>
			</div>
		</div>
		<div class="card origin">
			{@render head('原点')}
			<div class="row active">
				<div class="hot">{@render icon('finish')}<span>指定位置</span></div>
				<button class="sq" aria-label="指定位置">{@render icon('place')}</button>
			</div>
			<div class="box">
				{@render head('放置')}
				<div class="row method">
					<label class="grow" for="method">方法</label>
					<div class="combo mid">
						{@render icon('infer')}
						<select id="method"><option>自动判断</option></select><span class="caret"></span>
					</div>
				</div>
				<div class="nested">{@render head('跟踪', false)}</div>
			</div>
			<div class="box closed">{@render head('移动视图', false)}</div>
		</div>
		<div class="card scale">
			{@render head('比例')}
			<div class="row">
				<label class="grow" for="scale">比例</label>
				<div class="combo mid focus">
					<select id="scale" bind:value={scale}><option>2:1</option></select><span class="caret"></span>
				</div>
			</div>
			<div class="row inferred">
				<label class="grow" for="inferred">自动判断视图比例</label>
				<input id="inferred" type="text" bind:value={inferred} />
				<button class="sq small" aria-label="自动判断">{@render icon('bolt')}</button>
			</div>
		</div>
		<div class="card tag">
			{@render head('父项上的标签')}
			<div class="row">
				<label class="grow" for="tag">标签</label>
				<div class="combo mid">
					{@render icon('note')}
					<select id="tag"><option>注释</option></select><span class="caret"></span>
				</div>
			</div>
		</div>
		<div class="card closed">{@render head('设置', false)}</div>
		<div class="collapse"><span class="sort"></span></div>
		<div class="actions"><button>关闭</button></div>
	</div>

	<div class="ime">
		{@render icon('sogou')}
		<div class="keys">
			<button>中</button>
			<button>•,</button>
			{#each ['imeMic', 'imeKey', 'imeShirt', 'imePad', 'imeGrid', 'imeGear'] as name}
				<button aria-label={name}>{@render icon(name)}</button>
			{/each}
		</div>
	</div>
	<div class="watermark">CSDN @山涧果子</div>
</div>

<style>
	:global(body) {
		margin: 0;
	}

	.app {
		--blue: #005f87;
		--font: 'Noto Sans', 'Noto Sans CJK SC', sans-serif;
		position: relative;
		display: flex;
		flex-direction: column;
		height: 100vh;
		overflow: hidden;
		background: #fff;
		color: #222;
		font: 12px/20px var(--font);
	}

	.app :global(*) {
		box-sizing: border-box;
	}

	button {
		display: flex;
		align-items: center;
		justify-content: center;
		padding: 0;
		border: 0;
		background: none;
		color: inherit;
		font: inherit;
		white-space: nowrap;
	}

	h1,
	h2,
	h3 {
		margin: 0;
		font: inherit;
	}

	.icon {
		display: block;
		flex: none;
	}

	.caret {
		flex: none;
		border: 4px solid transparent;
		border-top-color: currentColor;
		border-bottom: 0;
	}

	.sort {
		display: inline-block;
		border: 4px solid transparent;
		border-bottom: 5px solid #111;
		border-top: 0;
	}

	.tri {
		flex: none;
		width: 8px;
		border: 4px solid transparent;
		border-top-color: var(--blue);
		border-bottom: 0;
	}

	.tri.shut {
		border: 4px solid transparent;
		border-left: 5px solid var(--blue);
		border-right: 0;
	}

	/* header */
	header {
		flex: none;
		background: linear-gradient(90deg, #00658b, #007eac);
		color: #fff;
	}

	.quick {
		display: flex;
		align-items: center;
		gap: 6px;
		height: 27px;
		padding: 0 7px 0 3px;
	}

	.nx {
		font: 900 21px/26px Inter, sans-serif;
		margin-right: 10px;
	}

	.bar {
		width: 1px;
		height: 18px;
		background: #00506f;
	}

	.window {
		gap: 5px;
		font-size: 11px;
	}

	.custom {
		padding-top: 2px;
		border-top: 1px solid #fff;
	}

	h1 {
		flex: 1;
		padding-right: 4px;
		text-align: center;
		font-size: 12px;
	}

	.siemens {
		font: 900 13px/20px Inter, sans-serif;
		margin-right: 20px;
	}

	.controls {
		display: flex;
		gap: 13px;
	}

	nav {
		display: flex;
		align-items: center;
		height: 29px;
	}

	.tab {
		height: 27px;
		padding: 0 12px;
		border-bottom: 2px solid transparent;
		font-size: 13px;
	}

	.tab.file {
		padding: 0 25px 0 20px;
	}

	.tab.active {
		border-color: #ffc845;
		color: #ffc845;
	}

	.search {
		display: flex;
		flex: none;
		align-items: center;
		width: 178px;
		height: 22px;
		margin-left: auto;
		padding-right: 2px;
		border: 1px solid #888;
		background: #fff;
	}

	.search input {
		flex: 1;
		min-width: 0;
		padding: 0;
		border: 0;
		font: 11px/18px var(--font);
	}

	.search input::placeholder {
		color: #aaa;
	}

	.tail {
		display: flex;
		align-items: center;
		gap: 10px;
		padding: 0 10px;
	}

	.learn {
		gap: 5px;
		font-size: 11px;
	}

	.bang {
		padding: 0 2px 0 4px;
		font-size: 20px;
	}

	/* ribbon */
	.ribbon {
		display: flex;
		flex: none;
		height: 94px;
		border-bottom: 1px solid #d9d9d9;
		font-size: 11px;
	}

	.group {
		position: relative;
		display: flex;
		flex-direction: column;
		padding: 0 8px;
	}

	.group::after {
		content: '';
		position: absolute;
		top: 5px;
		right: 0;
		bottom: 4px;
		width: 1px;
		background: #d9d9d9;
	}

	.items {
		display: flex;
		flex: 1;
		padding-top: 5px;
	}

	.big {
		flex-direction: column;
		justify-content: flex-start;
		align-self: flex-start;
		min-width: 40px;
		padding: 0 4px;
	}

	.grid {
		display: grid;
		grid-auto-rows: 34px;
		align-content: start;
	}

	.more {
		align-self: flex-start;
		margin: 14px 2px 0 3px;
	}

	.group footer {
		position: relative;
		height: 20px;
		padding-right: 14px;
		color: var(--blue);
		line-height: 22px;
		text-align: center;
	}

	.group footer .caret {
		position: absolute;
		top: 9px;
		right: 0;
		color: #222;
	}

	.ribbon .end {
		align-self: flex-end;
		margin: 0 5px 7px auto;
	}

	.selection {
		display: flex;
		flex: none;
		align-items: center;
		height: 28px;
		border-bottom: 1px solid #999;
		font-size: 11px;
	}

	.menu {
		gap: 6px;
		padding: 0 7px 0 12px;
	}

	.rule {
		width: 1px;
		height: 20px;
		background: #ccc;
	}

	.combo {
		display: flex;
		align-items: center;
		height: 26px;
		padding: 0 4px 0 5px;
		border: 1px solid #777;
		background: #fff;
	}

	.combo select {
		flex: 1;
		min-width: 0;
		padding: 0 0 0 5px;
		border: 0;
		background: none;
		color: inherit;
		font: inherit;
		appearance: none;
	}

	.selection .combo {
		height: 22px;
		padding-left: 0;
	}

	.selection .combo select {
		padding-left: 3px;
	}

	.type {
		width: 149px;
		margin: 0 9px 0 12px;
	}

	.scope {
		width: 156px;
		margin-left: 9px;
	}

	.picks {
		display: flex;
		align-items: center;
		gap: 9px;
		padding: 0 12px 0 9px;
	}

	.selection .end {
		margin: 4px 5px 0 auto;
	}

	/* main */
	main {
		display: flex;
		flex: 1;
		min-height: 0;
	}

	.rail {
		flex: none;
		width: 37px;
		border-right: 1px solid #999;
		background: #dcdcdc;
	}

	.rail button {
		width: 36px;
		height: 44px;
		padding-left: 3px;
	}

	.rail button:first-child {
		height: 32px;
	}

	.rail button.active {
		width: 34px;
		margin-left: 3px;
		padding: 0;
		border: 1px solid #999;
		border-right: 0;
		background: #fff;
	}

	.navigator {
		display: flex;
		flex: none;
		flex-direction: column;
		width: 322px;
		padding: 0 8px 5px;
	}

	.navigator h2 {
		display: flex;
		align-items: center;
		gap: 4px;
		height: 26px;
		padding-right: 2px;
		margin-left: -2px;
	}

	.square {
		width: 12px;
		height: 11px;
		margin-left: auto;
		border: 1px solid #111;
		border-top-width: 2px;
	}

	.scroll {
		flex: 1;
		min-height: 0;
		overflow: hidden;
		border: 1px solid #d5d5d5;
		border-bottom: 0;
	}

	table {
		width: 100%;
		border-collapse: separate;
		border-spacing: 0;
		table-layout: fixed;
	}

	.c-name {
		width: 200px;
	}

	.c-flag {
		width: 24px;
	}

	th,
	td {
		height: 20px;
		padding: 0;
		overflow: hidden;
		border-right: 1px solid #e8e8e8;
		border-bottom: 1px solid #e8e8e8;
		white-space: nowrap;
	}

	th {
		height: 22px;
		padding-left: 6px;
		border-color: #d0d0d0;
		background: #f0f0f0;
		font-weight: normal;
		text-align: left;
	}

	th .sort {
		margin: 0 0 2px 14px;
	}

	tr:nth-child(even) td {
		background: #fafafa;
	}

	td > .icon {
		margin-left: 5px;
	}

	.node {
		display: flex;
		align-items: center;
		gap: 2px;
		height: 19px;
	}

	.node span {
		padding-left: 1px;
	}

	.node.dim {
		color: #aaa;
	}

	.guide {
		flex: none;
		margin-right: -2px;
		fill: none;
		stroke: #999;
		stroke-dasharray: 1 1;
	}

	.guide rect {
		fill: #fff;
		stroke: #aaa;
		stroke-dasharray: none;
	}

	.sign {
		stroke: #111;
		stroke-dasharray: none;
	}

	.hscroll {
		height: 17px;
		padding: 7px 10px 0 17px;
		border: 1px solid #d5d5d5;
		border-top: 0;
		background: #f0f0f0;
	}

	.hscroll span {
		display: block;
		height: 2px;
		background: #888;
	}

	.splitter {
		height: 6px;
		margin: 2px 0 1px;
		border: 1px solid #aaa;
		background: #dcdcdc;
	}

	.fold {
		flex: none;
		justify-content: flex-start;
		gap: 9px;
		height: 24px;
		padding-left: 10px;
		border-bottom: 2px solid #d0d0d0;
		color: var(--blue);
		font-size: 14px;
	}

	.fold .tri {
		width: 5px;
	}

	.work {
		display: flex;
		flex: 1;
		flex-direction: column;
		min-width: 0;
		border-bottom: 1px solid #999;
	}

	.doc-tabs {
		display: flex;
		height: 27px;
		border-bottom: 2px solid var(--blue);
	}

	.doc-tabs button {
		gap: 6px;
		padding: 0 6px;
		background: var(--blue);
		color: #fff;
	}

	.canvas {
		position: relative;
		flex: 1;
		min-height: 0;
		overflow: hidden;
		border: 1px solid #888;
		border-left: 2px solid #999;
	}

	.drawing {
		display: block;
		width: 100%;
		height: 100%;
	}

	.thin,
	.line,
	.body,
	.thick,
	.dash,
	.chain {
		fill: none;
		stroke: #111;
	}

	.thin {
		stroke: #777;
	}

	.body {
		stroke-width: 1.5;
	}

	.thick {
		stroke: #000;
		stroke-width: 2;
	}

	.dash {
		stroke: #555;
		stroke-dasharray: 8 3;
	}

	.chain {
		stroke-dasharray: 5 1;
	}

	.outline {
		stroke: #000;
		stroke-width: 1.500;
	}

	.dot {
		fill: #a89650;
		stroke: #6e6235;
	}

	text {
		fill: #333;
		font: 12px 'Liberation Mono', monospace;
	}

	text.mid {
		font: 12px 'Liberation Sans Narrow', 'Liberation Sans', sans-serif;
		text-anchor: middle;
	}

	text.sec {
		font-size: 14px;
		text-anchor: middle;
	}

	text.tiny {
		font-size: 8px;
	}

	text.cn {
		font: 11px 'Noto Sans CJK SC', sans-serif;
	}

	text.low {
		font-size: 8px;
	}

	text.big {
		font: 300 16px 'Noto Sans CJK SC', sans-serif;
	}

	text.wide {
		font-size: 22px;
	}

	text.name {
		font: 12px var(--font);
	}

	.float {
		position: absolute;
		top: 4px;
		left: 742px;
		display: flex;
		align-items: center;
		gap: 8px;
		width: 74px;
		height: 34px;
		padding-left: 13px;
		border-bottom: 1px solid #ccc;
		background: #fff;
	}

	.float .caret {
		border-width: 3px;
		border-bottom: 0;
	}

	.float i {
		width: 1px;
		height: 26px;
		margin: 0 -3px 0 0;
		background: #ccc;
	}

	.float .low {
		margin-top: 12px;
	}

	.status {
		flex: none;
		height: 25px;
		padding-left: 3px;
		border-top: 1px solid #aaa;
		border-bottom: 3px solid #d7e6ee;
		color: #111;
		font-size: 11px;
		font-weight: 500;
	}

	/* dialog */
	.dialog {
		position: absolute;
		top: 255px;
		left: 287px;
		display: flex;
		flex-direction: column;
		gap: 2px;
		width: 322px;
		padding: 0 5px 10px;
		border: 1px solid #ddd;
		background: #f0f0f0;
	}

	.title {
		display: flex;
		align-items: center;
		gap: 8px;
		height: 24px;
		margin: -1px -6px 4px;
		padding: 0 9px 0 7px;
		background: var(--blue);
		color: #fff;
	}

	.title h2 {
		flex: 1;
		font-size: 14px;
	}

	.title button {
		margin-left: 3px;
	}

	.card {
		padding: 0 8px;
		border: 1px solid #ccc;
		background: #fff;
	}

	.first {
		padding: 7px 8px 8px;
	}

	.bound,
	.parent,
	.scale {
		padding-bottom: 7px;
	}

	.origin,
	.tag {
		padding-bottom: 8px;
	}

	h3 {
		display: flex;
		align-items: center;
		gap: 6px;
		height: 24px;
		color: var(--blue);
		font-size: 13px;
		font-weight: bold;
	}

	.closed h3 {
		height: 23px;
	}

	.row {
		display: flex;
		align-items: center;
		gap: 2px;
		min-height: 26px;
	}

	.row.tall {
		height: 34px;
	}

	.row.inferred {
		gap: 4px;
	}

	.row > .icon + .grow {
		padding-left: 4px;
	}

	.grow {
		flex: 1;
	}

	.bound h3,
	.parent h3 {
		margin-bottom: 5px;
	}

	.origin > h3,
	.scale h3,
	.tag h3 {
		margin-bottom: 6px;
	}

	.sq {
		width: 32px;
		height: 32px;
		border: 1px solid #777;
		background: #fff;
	}

	.sq.small {
		width: 24px;
		height: 24px;
	}

	.split {
		display: flex;
		height: 32px;
		border: 1px solid #777;
	}

	.split button {
		width: 30px;
	}

	.split .drop {
		width: 17px;
		border-left: 1px solid #777;
	}

	.split .caret {
		border-width: 3px;
		border-bottom: 0;
	}

	.hot {
		display: flex;
		flex: 1;
		align-items: center;
		gap: 4px;
		height: 32px;
		background: #ffe07a;
	}

	.active .sq {
		border-color: #ffc233;
		background: #ffe07a;
	}

	.box {
		margin-top: 4px;
		padding: 0 8px 8px;
		border: 1px solid #ccc;
	}

	.box.closed {
		padding-bottom: 0;
	}

	.origin > h3 {
		margin-bottom: 6px;
	}

	.method {
		margin: 6px 0 3px;
	}

	.box .method .combo select,
	.tag select {
		padding-left: 3px;
	}

	.nested {
		padding-left: 10px;
	}

	.combo.mid {
		width: 138px;
	}

	.focus select {
		height: 20px;
		margin-left: -3px;
		margin-right: 6px;
		padding-left: 1px;
		border: 1px dotted #111;
		background: #d9eaef;
	}

	#inferred {
		width: 82px;
		height: 24px;
		padding: 0 6px;
		border: 1px solid #777;
		background: #fff;
		color: #222;
		font: 14px var(--font);
		text-align: right;
	}

	.collapse {
		height: 13px;
		border-bottom: 1px solid #ccc;
		line-height: 10px;
		text-align: center;
	}

	.actions {
		display: flex;
		justify-content: flex-end;
		padding: 6px 10px 0;
	}

	.actions button {
		width: 54px;
		height: 25px;
		background: var(--blue);
		color: #fff;
	}

	/* input method bar */
	.ime {
		position: absolute;
		bottom: 2px;
		left: 1155px;
		display: flex;
		align-items: center;
	}

	.keys {
		display: flex;
		width: 200px;
		height: 26px;
		margin-left: -6px;
		padding-left: 6px;
		border: 1px solid #b8cbe6;
		background: #fff;
	}

	.ime > .icon {
		position: relative;
		z-index: 1;
	}

	.keys button {
		flex: 1;
		color: #0b6fd6;
		font-size: 14px;
		font-weight: bold;
	}

	.watermark {
		position: absolute;
		right: 5px;
		bottom: 8px;
		color: rgba(140, 140, 140, 0.5);
		font: 300 38px/48px var(--font);
		pointer-events: none;
	}
</style>
